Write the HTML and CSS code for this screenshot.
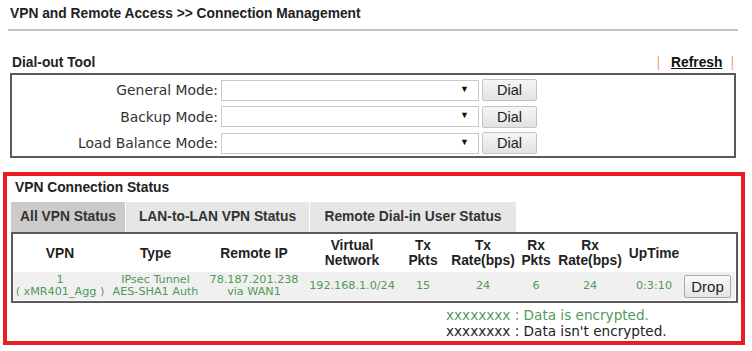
FILE: index.html
```html
<!DOCTYPE html>
<html lang="en">
<head>
  <meta charset="UTF-8" />
  <title>Connection Management</title>
  <link rel="stylesheet" href="styles.css">
</head>
<body>
  <h2 class="pageTitle">VPN and Remote Access &gt;&gt; Connection Management</h2>

  <div class="toolHead">
    <span class="secTitle">Dial-out Tool</span>
    <span class="refresh"><span class="pipe">|</span><a href="#">Refresh</a><span class="pipe">|</span></span>
  </div>
  <div class="dialBox">
    <div class="dialRow">
      <label>General Mode:</label>
      <div class="fakeSelect"><span class="arrow">&#9660;</span></div>
      <button class="btn">Dial</button>
    </div>
    <div class="dialRow">
      <label>Backup Mode:</label>
      <div class="fakeSelect"><span class="arrow">&#9660;</span></div>
      <button class="btn">Dial</button>
    </div>
    <div class="dialRow">
      <label>Load Balance Mode:</label>
      <div class="fakeSelect"><span class="arrow">&#9660;</span></div>
      <button class="btn">Dial</button>
    </div>
  </div>

  <div class="statusBox">
    <div class="secTitle statusTitle">VPN Connection Status</div>
    <div class="tabs">
      <div class="tab active">All VPN Status</div>
      <div class="tab lanTab">LAN-to-LAN VPN Status</div>
      <div class="tab dialinTab">Remote Dial-in User Status</div>
    </div>
    <div class="tableBox">
      <table class="vpnTable">
        <colgroup>
          <col style="width:94px"><col style="width:97px"><col style="width:100px"><col style="width:96px">
          <col style="width:46px"><col style="width:74px"><col style="width:32px"><col style="width:76px">
          <col style="width:52px"><col style="width:55px">
        </colgroup>
        <tr class="headRow">
          <th>VPN</th><th>Type</th><th>Remote IP</th><th>Virtual<br>Network</th>
          <th>Tx<br>Pkts</th><th>Tx<br>Rate(bps)</th><th>Rx<br>Pkts</th><th>Rx<br>Rate(bps)</th>
          <th>UpTime</th><th></th>
        </tr>
        <tr class="dataRow">
          <td>1<br>( xMR401_Agg )</td>
          <td>IPsec Tunnel<br>AES-SHA1 Auth</td>
          <td>78.187.201.238<br>via WAN1</td>
          <td>192.168.1.0/24</td>
          <td>15</td><td>24</td><td>6</td><td>24</td>
          <td>0:3:10</td>
          <td><button class="dropBtn">Drop</button></td>
        </tr>
      </table>
    </div>
    <div class="legend">
      <div class="enc">xxxxxxxx : Data is encrypted.</div>
      <div>xxxxxxxx : Data isn't encrypted.</div>
    </div>
  </div>
</body>
</html>
```

FILE: styles.css
```css
body {
  margin: 0;
  width: 752px;
  height: 351px;
  background: #fff;
  font-family: "Liberation Sans", Arial, sans-serif;
  color: #222;
  overflow: hidden;
}
.pageTitle {
  margin: 0 14px 0 8px;
  padding: 6px 2px 7px;
  font-size: 13.8px;
  line-height: 16px;
  border-bottom: 2px solid #c4c4c4;
}
.secTitle {
  font-weight: bold;
  font-size: 13.8px;
}
.toolHead {
  display: flex;
  justify-content: space-between;
  align-items: center;
  margin: 23px 18px 0 12px;
  height: 17px;
}
.refresh {
  font-size: 13.8px;
  font-weight: bold;
}
.refresh a {
  color: #111;
  margin: 0 8px 0 11px;
}
.pipe {
  color: #e79a9a;
  font-weight: normal;
}
.dialBox {
  margin: 2px 16px 0 10px;
  border: 2px solid #5a5a5a;
  height: 79px;
  padding-top: 2px;
  box-sizing: content-box;
}
.dialRow {
  display: flex;
  align-items: center;
  height: 26.5px;
}
.dialRow label {
  width: 206px;
  text-align: right;
  font-family: "DejaVu Sans", Verdana, sans-serif;
  font-size: 13.9px;
  color: #333;
  padding-right: 3px;
}
.fakeSelect {
  width: 256px;
  height: 19px;
  border: 1px solid #c8c8c8;
  background: #fff;
  position: relative;
}
.arrow {
  position: absolute;
  right: 9px;
  top: 3px;
  font-size: 9px;
  color: #111;
}
.btn {
  margin-left: 3px;
  width: 55px;
  height: 22px;
  border: 1px solid #c4c4c4;
  border-radius: 2px;
  background: linear-gradient(#f6f6f6, #e2e2e2);
  font-family: "Liberation Sans", Arial, sans-serif;
  font-size: 14.5px;
  color: #222;
  padding: 0;
}
.statusBox {
  margin: 14px 7px 0 3px;
  border: 4px solid #ec1c24;
  height: 173px;
  box-sizing: border-box;
}
.statusTitle {
  padding: 4px 0 0 8px;
  height: 26px;
  line-height: 16px;
  box-sizing: border-box;
}
.tabs {
  display: flex;
  gap: 1px;
  margin-left: 4px;
  height: 30px;
}
.tab {
  background: #e6e6e6;
  font-weight: bold;
  font-size: 13.8px;
  color: #333;
  line-height: 30px;
  text-align: center;
  white-space: nowrap;
  width: 114px;
}
.tab.active {
  background: #cbcbcb;
}
.lanTab {
  width: 183px;
}
.dialinTab {
  width: 206px;
}
.tableBox {
  margin: 0 3px 0 4px;
  border: 2px solid #5a5a5a;
  height: 71px;
  box-sizing: border-box;
}
.vpnTable {
  border-collapse: collapse;
  table-layout: fixed;
  width: 722px;
}
.vpnTable th {
  font-size: 13.8px;
  line-height: 15px;
  color: #222;
  height: 38px;
  padding: 0;
  vertical-align: middle;
  white-space: nowrap;
}
.dataRow td {
  background: #f0f0f0;
  font-family: "DejaVu Sans", Verdana, sans-serif;
  font-size: 11.2px;
  line-height: 12px;
  color: #4f9a55;
  text-align: center;
  height: 28px;
  padding: 0;
  white-space: nowrap;
}
.dropBtn {
  width: 47px;
  height: 23px;
  border: 1px solid #a8a8a8;
  border-radius: 2px;
  background: linear-gradient(#fafafa, #e4e4e4);
  font-family: "Liberation Sans", Arial, sans-serif;
  font-size: 15px;
  color: #222;
  padding: 0;
}
.legend {
  margin: 4px 0 0 439px;
  font-family: "DejaVu Sans", Verdana, sans-serif;
  font-size: 13.6px;
  line-height: 16px;
  color: #222;
}
.legend .enc {
  color: #4f9a5f;
}
```
